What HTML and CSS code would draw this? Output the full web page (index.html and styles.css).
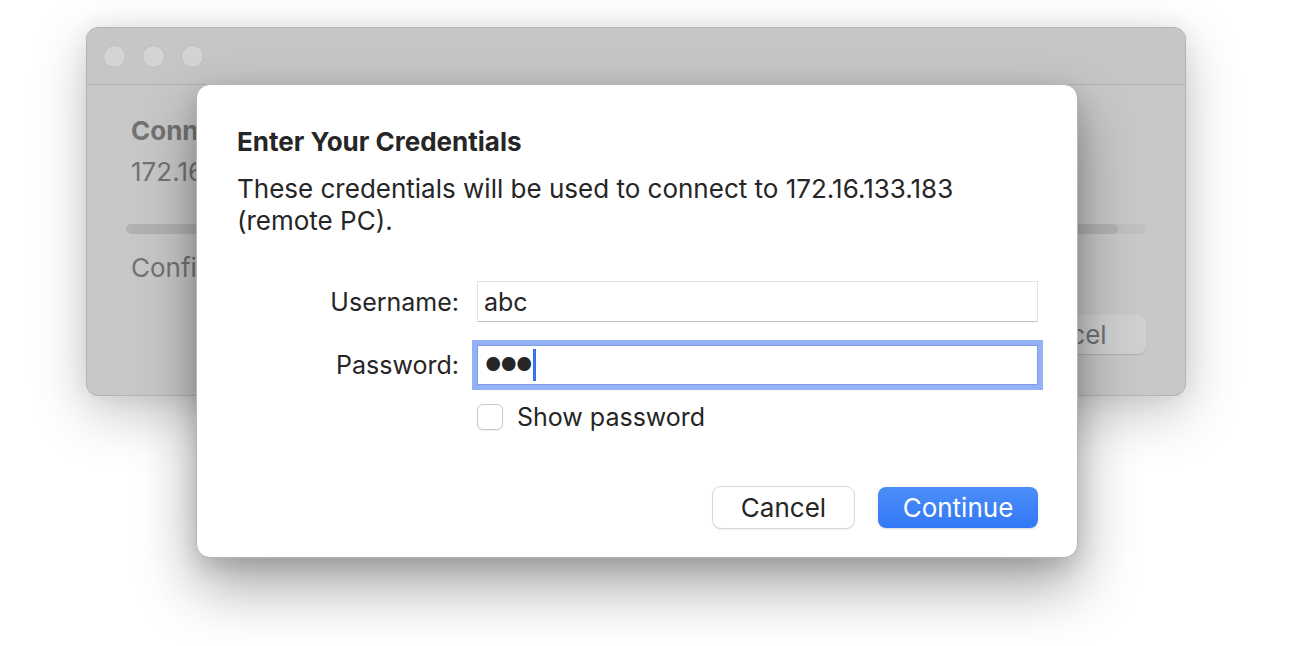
FILE: index.html
```html
<!DOCTYPE html>
<html>
<head>
<meta charset="utf-8">
<link rel="stylesheet" href="styles.css">
</head>
<body>
<div class="stage">
  <div class="window">
    <div class="titlebar">
      <span class="light"></span><span class="light"></span><span class="light"></span>
    </div>
    <div class="win-body">
      <div class="win-line win-title">Connecting</div>
      <div class="win-line win-sub">172.16.133.183</div>
      <div class="progress"><div class="progress-fill"></div></div>
      <div class="win-line win-status">Configuring</div>
      <div class="win-actions"><span class="win-btn">Cancel</span></div>
    </div>
  </div>

  <div class="dialog">
    <h1 class="dlg-title">Enter Your Credentials</h1>
    <p class="dlg-text">These credentials will be used to connect to 172.16.133.183 (remote PC).</p>
    <div class="form">
      <label class="lbl">Username:</label>
      <div class="field"><span class="value">abc</span></div>
      <label class="lbl">Password:</label>
      <div class="field focused"><span class="dots">●●●</span><span class="caret"></span></div>
      <div></div>
      <div class="check-row"><span class="checkbox"></span><span>Show password</span></div>
    </div>
    <div class="actions">
      <button class="btn">Cancel</button>
      <button class="btn primary">Continue</button>
    </div>
  </div>
</div>
</body>
</html>
```
FILE: styles.css
```css
* { box-sizing: border-box; }
html, body { margin: 0; padding: 0; }
body {
  width: 1314px;
  height: 646px;
  overflow: hidden;
  background: #ffffff;
  font-family: Inter, "Liberation Sans", sans-serif;
  color: #262626;
}
.stage {
  position: relative;
  width: 1314px;
  height: 646px;
  padding: 27px 0 0 86px;
}
.window {
  width: 1100px;
  height: 369px;
  border-radius: 12px;
  background: #c8c8c8;
  border: 1px solid #b3b3b3;
  box-shadow: 0 18px 55px rgba(0,0,0,0.22), 0 0 24px rgba(0,0,0,0.07);
  overflow: hidden;
}
.titlebar {
  height: 57px;
  border-bottom: 1px solid #b0b0b0;
  display: flex;
  align-items: center;
  gap: 16px;
  padding-left: 16px;
  background: #c6c6c6;
}
.light {
  width: 23px;
  height: 23px;
  border-radius: 50%;
  background: #d4d4d4;
  border: 1px solid #bdbdbd;
}
.win-body {
  padding: 31px 39px 0 39px;
  color: #737373;
  font-size: 26px;
}
.win-line {
  padding-left: 5px;
  line-height: 30px;
  width: 70px;
  overflow: hidden;
  white-space: nowrap;
}
.win-title { font-weight: 700; }
.win-sub { margin-top: 11px; }
.progress {
  margin-top: 37px;
  height: 10px;
  border-radius: 5px;
  background: #c0c0c0;
  overflow: hidden;
}
.progress-fill {
  width: 97.3%;
  height: 100%;
  border-radius: 5px;
  background: #b2b2b2;
}
.win-status { margin-top: 19px; }
.win-actions {
  display: flex;
  justify-content: flex-end;
  margin-top: 32px;
}
.win-btn {
  width: 164px;
  height: 39px;
  border-radius: 8px;
  background: #d0d0d0;
  box-shadow: 0 1px 1px rgba(0,0,0,0.12);
  display: flex;
  align-items: center;
  justify-content: center;
  color: #717171;
}

.dialog {
  position: absolute;
  left: 196px;
  top: 84px;
  width: 882px;
  height: 474px;
  background: #ffffff;
  border-radius: 14px;
  border: 1px solid #b5b5b5;
  box-shadow: 0 28px 60px rgba(0,0,0,0.36), 0 8px 22px rgba(0,0,0,0.12);
  padding: 41px 39px 29px 40px;
  display: flex;
  flex-direction: column;
}
.dlg-title {
  margin: 0;
  font-size: 26px;
  font-weight: 700;
  line-height: 32px;
  color: #262626;
}
.dlg-text {
  margin: 15px 0 0 0;
  font-size: 26px;
  line-height: 32px;
  width: 760px;
  color: #262626;
}
.form {
  margin-top: 44px;
  display: grid;
  grid-template-columns: 222px 1fr;
  column-gap: 18px;
  row-gap: 23px;
  align-items: center;
  font-size: 25px;
}
.lbl { text-align: right; color: #262626; }
.field {
  height: 41px;
  border: 1px solid #e3e3e3;
  border-bottom-color: #c2c2c2;
  display: flex;
  align-items: center;
  padding-left: 6px;
  color: #262626;
}
.field.focused {
  height: 40px;
  padding-left: 7px;
  border: 1px solid #7d9be6;
  box-shadow: 0 0 0 5px #93b2f6;
}
.dots { font-size: 18px; letter-spacing: -1px; line-height: 1; }
.caret {
  width: 3px;
  height: 32px;
  background: #3473ee;
  margin-left: 2px;
}
.check-row {
  margin-top: -6px;
  display: flex;
  align-items: center;
  gap: 14px;
}
.checkbox {
  width: 26px;
  height: 26px;
  border-radius: 6px;
  border: 1px solid #c8c8c8;
  background: #fff;
  box-shadow: 0 1px 1px rgba(0,0,0,0.06);
}
.actions {
  margin-top: auto;
  display: flex;
  justify-content: flex-end;
  gap: 24px;
}
.btn {
  height: 41px;
  border-radius: 8px;
  font-family: inherit;
  font-size: 26px;
  border: none;
  cursor: default;
  padding: 0;
}
.btn:first-child {
  width: 141px;
  background: #ffffff;
  color: #262626;
  box-shadow: 0 0 0 1px #d8d8d8, 0 1px 2px rgba(0,0,0,0.2);
}
.btn.primary {
  width: 160px;
  color: #ffffff;
  background: linear-gradient(#4b8ef8, #3377f6);
  box-shadow: 0 1px 2px rgba(0,0,0,0.15);
}
```
